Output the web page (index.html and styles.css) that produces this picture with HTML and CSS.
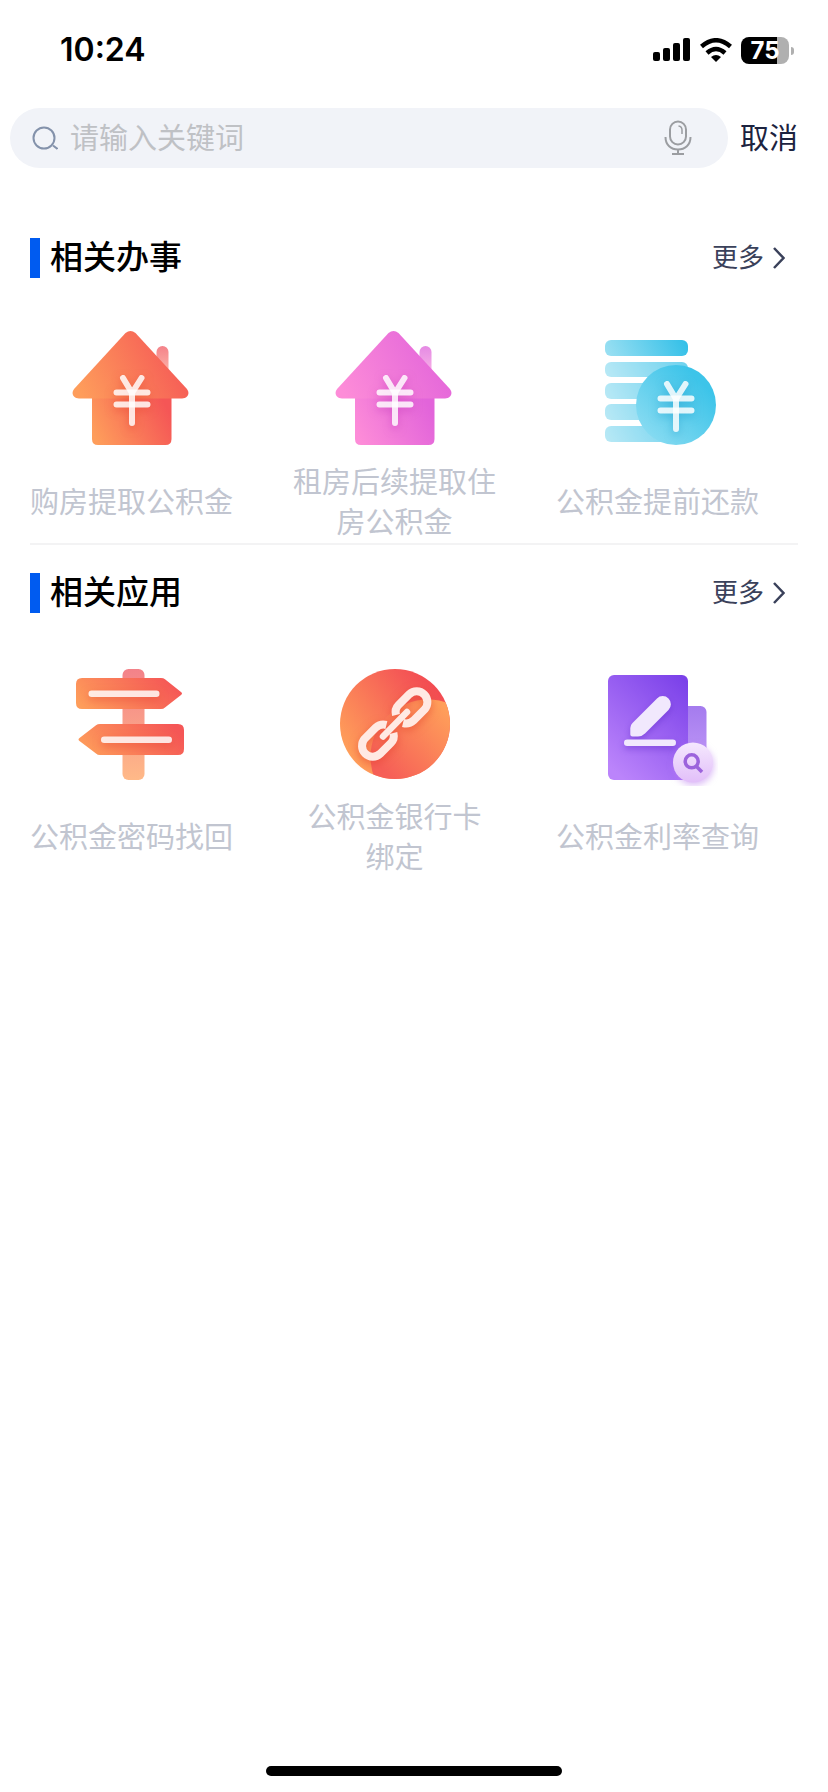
FILE: index.html
```html
<!DOCTYPE html>
<html lang="zh-CN">

<head>
    <meta charset="utf-8">
    <meta name="viewport" content="width=device-width, initial-scale=1">
    <title>搜索</title>
    <link rel="stylesheet" href="styles.css">
</head>

<body>
    <!-- shared gradients and the yen sign -->
    <svg class="defs" width="0" height="0" aria-hidden="true">
        <defs>
            <linearGradient id="orange" x1="0" y1="0.7" x2="1" y2="0.4">
                <stop offset="0" stop-color="#fe9d5b" />
                <stop offset="1" stop-color="#f55656" />
            </linearGradient>
            <linearGradient id="pink" x1="0" y1="0.7" x2="1" y2="0.4">
                <stop offset="0" stop-color="#fd8cd8" />
                <stop offset="1" stop-color="#e264da" />
            </linearGradient>
            <linearGradient id="blue" x1="0" y1="0.5" x2="1" y2="0.4">
                <stop offset="0" stop-color="#98dff2" />
                <stop offset="1" stop-color="#34c0e8" />
            </linearGradient>
            <linearGradient id="coin" x1="0.1" y1="0.9" x2="0.8" y2="0.2">
                <stop offset="0" stop-color="#8adcf2" />
                <stop offset="1" stop-color="#3dc4e9" />
            </linearGradient>
            <linearGradient id="post" x1="0" y1="0" x2="0" y2="1">
                <stop offset="0" stop-color="#f38289" />
                <stop offset="1" stop-color="#ffb988" />
            </linearGradient>
            <linearGradient id="chimney" x1="0" y1="0" x2="0" y2="1">
                <stop offset="0" stop-color="#f48289" />
                <stop offset="1" stop-color="#fdb4a8" />
            </linearGradient>
            <linearGradient id="chimney-pink" x1="0" y1="0" x2="0" y2="1">
                <stop offset="0" stop-color="#e58ae4" />
                <stop offset="1" stop-color="#f8b2e6" />
            </linearGradient>
            <linearGradient id="disc" x1="0.1" y1="0.8" x2="0.9" y2="0.2">
                <stop offset="0" stop-color="#ff9f5a" />
                <stop offset="0.8" stop-color="#f55a56" />
                <stop offset="1" stop-color="#f34c52" />
            </linearGradient>
            <linearGradient id="disc-front" gradientUnits="userSpaceOnUse" x1="45" y1="100" x2="108" y2="40">
                <stop offset="0" stop-color="#f65f57" />
                <stop offset="1" stop-color="#ff9f5a" />
            </linearGradient>
            <linearGradient id="violet" x1="0.2" y1="1" x2="0.9" y2="0">
                <stop offset="0" stop-color="#bb84fb" />
                <stop offset="1" stop-color="#7b41e9" />
            </linearGradient>
            <linearGradient id="violet-back" x1="0" y1="0" x2="0" y2="1">
                <stop offset="0" stop-color="#a47bee" />
                <stop offset="1" stop-color="#c49df8" />
            </linearGradient>
            <linearGradient id="badge" x1="0" y1="0" x2="0" y2="1">
                <stop offset="0" stop-color="#f5e8fe" />
                <stop offset="1" stop-color="#e2bff9" />
            </linearGradient>
            <clipPath id="disc-clip">
                <circle cx="60" cy="58" r="55" />
            </clipPath>
            <g id="yen" fill="none" stroke="#fff" stroke-opacity="0.84" stroke-width="6" stroke-linecap="round">
                <path d="M51 47L60 62L69.500 47M60 62V92" stroke-linejoin="round" />
                <path d="M44.500 61.500H75.500M44.500 73.500H75.500" />
            </g>
        </defs>
    </svg>

    <div class="status">
        <span class="time">10:24</span>
        <div class="status-icons">
            <svg width="38" height="24" viewBox="0 0 38 24" aria-hidden="true">
                <rect x="0" y="14" width="7" height="9" rx="2" />
                <rect x="10" y="10" width="7" height="13" rx="2" />
                <rect x="20" y="5" width="7" height="18" rx="2" />
                <rect x="30" y="0" width="7" height="23" rx="2" />
            </svg>
            <svg width="32" height="24" viewBox="0 0 32 24" aria-hidden="true">
                <g fill="none" stroke="#000" stroke-width="4.500">
                    <path d="M1.500 8.500Q16 -4 30.500 8.500" />
                    <path d="M7 15Q16 7 25 15" />
                </g>
                <path d="M11 19Q16 15 21 19L16 24Z" />
            </svg>
            <span class="battery">75</span>
        </div>
    </div>

    <form class="search">
        <div class="search-box">
            <svg width="26" height="26" viewBox="0 0 26 26" fill="none" stroke="#8492ab" stroke-width="2" aria-hidden="true">
                <circle cx="12" cy="13" r="10.500" />
                <path d="M21 20.500L25.500 24" />
            </svg>
            <input type="text" id="keyword" placeholder="请输入关键词" aria-label="请输入关键词">
            <button type="button" class="mic" aria-label="语音输入">
                <svg width="28" height="36" viewBox="0 0 28 36" fill="none" stroke="#9b9da1" stroke-width="2">
                    <rect x="6" y="1.500" width="16" height="23" rx="8" />
                    <path d="M14.500 6Q18 6.500 18 10V14" stroke-width="1.500" />
                    <path d="M1.500 17C1.500 25 7 29.500 14 29.500S26.500 25 26.500 17M14 29.500V34M8 34H20" />
                </svg>
            </button>
        </div>
        <button type="reset" class="cancel">取消</button>
    </form>

    <main>
        <section>
            <div class="title">
                <h2>相关办事</h2>
                <a href="#" class="more">更多
                    <svg width="12" height="22" viewBox="0 0 12 22" aria-hidden="true">
                        <path d="M1 1L10.500 11L1 21" />
                    </svg>
                </a>
            </div>
            <div class="list">
                <a href="#" class="item">
                    <svg class="icon" viewBox="0 0 120 120" aria-hidden="true">
                        <path fill="url(#chimney)" d="M84.500 42V21A6 6 0 0 1 96.500 21V42Z" />
                        <path fill="url(#orange)" d="M20 67H99.500V108Q99.500 114 93.500 114H26Q20 114 20 108Z" />
                        <path fill="url(#orange)" d="M53.500 2Q58.500 -2 63.500 2L114.500 57.500C118.500 62 116 67.500 110 67.500H7C1 67.500 -1.500 62 2.500 57.500Z" />
                        <use href="#yen" class="shadow-red" />
                    </svg>
                    <span class="label">购房提取公积金</span>
                </a>
                <a href="#" class="item">
                    <svg class="icon" viewBox="0 0 120 120" aria-hidden="true">
                        <path fill="url(#chimney-pink)" d="M84.500 42V21A6 6 0 0 1 96.500 21V42Z" />
                        <path fill="url(#pink)" d="M20 67H99.500V108Q99.500 114 93.500 114H26Q20 114 20 108Z" />
                        <path fill="url(#pink)" d="M53.500 2Q58.500 -2 63.500 2L114.500 57.500C118.500 62 116 67.500 110 67.500H7C1 67.500 -1.500 62 2.500 57.500Z" />
                        <use href="#yen" class="shadow-pink" />
                    </svg>
                    <span class="label">租房后续提取住<br>房公积金</span>
                </a>
                <a href="#" class="item">
                    <svg class="icon" viewBox="0 0 120 120" aria-hidden="true">
                        <g fill="url(#blue)">
                            <rect x="7" y="9" width="83" height="16" rx="6" />
                            <g opacity="0.7">
                                <rect x="7" y="31" width="83" height="15" rx="6" />
                                <rect x="7" y="52" width="83" height="16" rx="6" />
                                <rect x="7" y="73" width="83" height="16" rx="6" />
                                <rect x="7" y="95" width="83" height="16" rx="6" />
                            </g>
                        </g>
                        <circle cx="78" cy="74" r="40" fill="url(#coin)" />
                        <use href="#yen" x="18" y="6" class="shadow-blue" />
                    </svg>
                    <span class="label">公积金提前还款</span>
                </a>
            </div>
        </section>

        <section>
            <div class="title">
                <h2>相关应用</h2>
                <a href="#" class="more">更多
                    <svg width="12" height="22" viewBox="0 0 12 22" aria-hidden="true">
                        <path d="M1 1L10.500 11L1 21" />
                    </svg>
                </a>
            </div>
            <div class="list">
                <a href="#" class="item">
                    <svg class="icon" viewBox="0 0 120 120" aria-hidden="true">
                        <rect x="50.500" y="3" width="22" height="111" rx="6" fill="url(#post)" />
                        <path fill="url(#orange)" d="M10 12H89Q91.500 12 93 13.200L109 26Q111 27.500 109 29L93 41.500Q91.500 43 89 43H10Q4 43 4 37V18Q4 12 10 12Z" />
                        <path fill="url(#orange)" d="M106 58H28Q25.500 58 24 59.200L7.500 72Q5.500 73.500 7.500 75L24 87.500Q25.500 89 28 89H106Q112 89 112 83V64Q112 58 106 58Z" />
                        <g class="shadow-red" fill="#fff" fill-opacity="0.84">
                            <rect x="16.500" y="24.500" width="71" height="6.500" rx="3.200" />
                            <rect x="29" y="70.500" width="71" height="6.500" rx="3.200" />
                        </g>
                    </svg>
                    <span class="label">公积金密码找回</span>
                </a>
                <a href="#" class="item">
                    <svg class="icon" viewBox="0 0 120 120" aria-hidden="true">
                        <circle cx="60" cy="58" r="55" fill="url(#disc)" />
                        <g clip-path="url(#disc-clip)">
                            <circle cx="93" cy="91" r="57.500" fill="url(#disc-front)" />
                        </g>
                        <g class="shadow-red" fill="none" stroke="#ffe9e3" stroke-width="8">
                            <path id="ring" d="M61 49Q59.500 43 63.500 39L74.300 28.200A10.800 10.800 0 0 1 89.700 43.300L78.500 54.500Q74 58.500 68 57" />
                            <use href="#ring" transform="rotate(180 59.700 58)" />
                            <path d="M72 46L48 70.500" stroke-width="6.500" stroke-linecap="round" />
                        </g>
                    </svg>
                    <span class="label">公积金银行卡<br>绑定</span>
                </a>
                <a href="#" class="item">
                    <svg class="icon" viewBox="0 0 120 120" aria-hidden="true">
                        <rect x="70" y="40" width="38.500" height="66" rx="6" fill="url(#violet-back)" />
                        <rect x="10" y="9" width="80" height="105" rx="6" fill="url(#violet)" />
                        <g class="shadow-violet" fill="#f1e8fd">
                            <path d="M59 32.500A8 8 0 0 1 70.500 44L47 67.500Q44 70.500 40 70.500H34.500Q32.300 70.500 32.300 68.500V62Q32.300 59 34.500 57Z" />
                            <rect x="26" y="73.500" width="52" height="6.500" rx="3.200" />
                        </g>
                        <circle cx="95" cy="96.500" r="20" fill="url(#badge)" class="shadow-badge" />
                        <g fill="none" stroke="#9c63dc" stroke-width="3.500">
                            <circle cx="93.700" cy="95.300" r="6.500" />
                            <path d="M98.500 100.500L104 106" />
                        </g>
                    </svg>
                    <span class="label">公积金利率查询</span>
                </a>
            </div>
        </section>
    </main>

    <div class="home-bar"></div>
</body>

</html>
```

FILE: styles.css
```css
* {
    box-sizing: border-box;
}

body {
    display: flex;
    flex-direction: column;
    min-height: 100vh;
    margin: 0;
    background: #fff;
    color: #000;
    font-family: "Liberation Sans", "Noto Sans CJK SC", sans-serif;
}

a {
    color: inherit;
    text-decoration: none;
}

button {
    padding: 0;
    border: 0;
    background: none;
    font-family: inherit;
}

svg {
    display: block;
    flex: none;
}

.defs {
    position: absolute;
}

/* status bar */
.status {
    display: flex;
    justify-content: space-between;
    align-items: center;
    height: 100px;
    padding: 0 34px 0 60px;
}

.time {
    font: 600 32px/40px Inter, sans-serif;
}

.status-icons {
    display: flex;
    align-items: center;
    gap: 9px;
}

.battery {
    position: relative;
    width: 48px;
    height: 27px;
    margin-right: 5px;
    border-radius: 8px;
    background: linear-gradient(to right, #000 75%, #b0b0b0 75%);
    color: #fff;
    font: 700 24px/27px Inter, sans-serif;
    text-align: center;
}

.battery:after {
    position: absolute;
    content: "";
    top: 10px;
    right: -5px;
    width: 3px;
    height: 8px;
    border-radius: 0 4px 4px 0;
    background: #b0b0b0;
}

/* search */
.search {
    display: flex;
    align-items: center;
    gap: 12px;
    padding: 8px 30px 0 10px;
}

.search-box {
    display: flex;
    flex: 1;
    align-items: center;
    gap: 12px;
    height: 60px;
    padding: 0 36px 0 22px;
    border-radius: 30px;
    background: #f1f3f8;
}

.search-box input {
    flex: 1;
    min-width: 0;
    height: 60px;
    padding: 2px 0 0;
    border: 0;
    outline: 0;
    background: none;
    font-family: inherit;
    font-size: 29px;
}

.search-box input::placeholder {
    color: #bfc1c5;
}

.cancel {
    padding-top: 2px;
    color: #1c2340;
    font-size: 29px;
    line-height: 40px;
}

/* sections */
main {
    flex: 1;
    padding-top: 70px;
}

/* divider between the two sections */
section + section:before {
    display: block;
    content: "";
    height: 2px;
    margin: 0 30px 28px;
    background: #f3f3f4;
}

.title {
    display: flex;
    justify-content: space-between;
    align-items: center;
    height: 40px;
    margin: 0 43px 0 30px;
}

h2 {
    margin: 0;
    padding-left: 10px;
    border-left: 10px solid #005bf0;
    font-size: 33px;
    font-weight: 500;
    line-height: 40px;
}

.more {
    display: flex;
    align-items: center;
    gap: 9px;
    color: #3a415a;
    font-size: 26px;
    line-height: 40px;
}

.more path {
    fill: none;
    stroke: #3a415a;
    stroke-width: 2.5;
}

.list {
    display: grid;
    grid-template-columns: repeat(3, 1fr);
    margin-right: 39px;
    padding-top: 53px;
}

.item {
    display: flex;
    flex-direction: column;
    align-items: center;
    gap: 12px;
}

.icon {
    width: 120px;
    height: 120px;
}

.label {
    display: flex;
    align-items: center;
    min-height: 80px;
    color: #c1c5d0;
    font-size: 29px;
    line-height: 40px;
    text-align: center;
}

.shadow-red {
    filter: drop-shadow(0 3px 4px rgba(225, 60, 40, .5));
}

.shadow-pink {
    filter: drop-shadow(0 3px 4px rgba(190, 50, 180, .5));
}

.shadow-blue {
    filter: drop-shadow(0 3px 4px rgba(20, 150, 200, .5));
}

.shadow-violet {
    filter: drop-shadow(0 3px 3px rgba(95, 40, 200, .45));
}

.shadow-badge {
    filter: drop-shadow(1px 3px 3px rgba(190, 130, 240, .5));
}

.home-bar {
    width: 296px;
    height: 10px;
    margin: 0 auto 16px;
    border-radius: 5px;
    background: #000;
}
```
